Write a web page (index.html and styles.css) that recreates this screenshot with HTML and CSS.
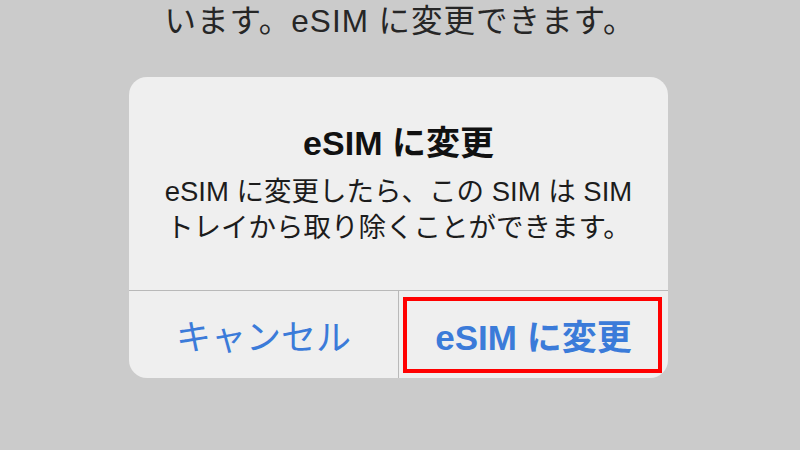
FILE: index.html
```html
<!DOCTYPE html>
<html lang="ja">
<head>
  <meta charset="UTF-8">
  <title>eSIMに変更</title>
  <link rel="stylesheet" href="styles.css">
</head>
<body>
  <p class="intro">います。eSIM に変更できます。</p>

  <div class="alert">
    <div class="alert-body">
      <h2 class="alert-title">eSIM に変更</h2>
      <p class="alert-text">eSIM に変更したら、この SIM は SIM<br>トレイから取り除くことができます。</p>
    </div>
    <div class="alert-actions">
      <button class="action">キャンセル</button>
      <button class="action action-main">eSIM に変更
        <span class="highlight"></span>
      </button>
    </div>
  </div>
</body>
</html>
```

FILE: styles.css
```css
body {
  margin: 0;
  height: 450px;
  overflow: hidden;
  background-color: #cbcbcb;
  font-family: "Liberation Sans", "Noto Sans CJK JP", sans-serif;
  color: #1c1c1c;
}

.intro {
  margin: 0;
  font-size: 31.5px;
  line-height: 42px;
  letter-spacing: 1px;
  text-align: center;
  color: #262626;
}

.alert {
  width: 539px;
  margin: 35px 0 0 129px;
  background-color: #efefef;
  border-radius: 18px;
  overflow: hidden;
}

.alert-body {
  padding: 48px 10px 44px;
  text-align: center;
}

.alert-title {
  margin: 0 0 13px;
  font-size: 34px;
  line-height: 36px;
  font-weight: bold;
  color: #111;
}

.alert-text {
  margin: 0;
  font-size: 27.5px;
  line-height: 36px;
}

.alert-actions {
  display: flex;
  border-top: 1px solid #b9b9b9;
}

.action {
  flex: 1;
  position: relative;
  height: 87px;
  padding: 0;
  border: none;
  background: none;
  font-family: inherit;
  font-size: 35px;
  color: #3b7bd9;
}

.action-main {
  border-left: 1px solid #b9b9b9;
  font-weight: bold;
}

.highlight {
  position: absolute;
  top: 6px;
  left: 4px;
  right: 6px;
  bottom: 5px;
  border: 4px solid #ff0000;
}
```
